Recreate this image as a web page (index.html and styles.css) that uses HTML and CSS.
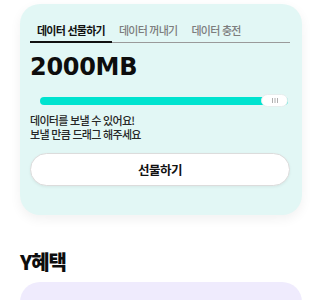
FILE: index.html
```html
<!DOCTYPE html>
<html lang="ko">
<head>
<meta charset="utf-8">
<link rel="stylesheet" href="styles.css">
</head>
<body>
<div class="page">
  <section class="gift-card">
    <nav class="tabs">
      <span class="tab active">데이터 선물하기</span>
      <span class="tab">데이터 꺼내기</span>
      <span class="tab">데이터 충전</span>
    </nav>
    <div class="amount">2000MB</div>
    <div class="slider">
      <div class="fill" style="width: 100%"></div>
      <div class="thumb">
        <svg width="6" height="5" viewBox="0 0 6 5"><path d="M0.5 0v5M3 0v5M5.5 0v5" stroke="#9a9a9a" stroke-width="0.8"/></svg>
      </div>
    </div>
    <p class="desc"><span class="line">데이터를 보낼 수 있어요!</span><span class="line">보낼 만큼 드래그 해주세요</span></p>
    <button class="gift-btn">선물하기</button>
  </section>
  <h2 class="section-title">Y혜택</h2>
  <section class="benefit-card"></section>
</div>
</body>
</html>
```
FILE: styles.css
```css
* { box-sizing: border-box; }
html, body { margin: 0; padding: 0; background: #fff; }
body { font-family: "Noto Sans CJK KR", "Noto Sans", sans-serif; color: #111; }
.page { padding: 4px 18px 0 20px; display: flex; flex-direction: column; }
.gift-card {
  background: #e2f7f5;
  border-radius: 20px;
  padding: 19px 12px 27px 10px;
  height: 211px;
  box-shadow: 0 4px 12px rgba(0,0,0,0.06);
  display: flex;
  flex-direction: column;
}
.tabs {
  display: flex;
  border-bottom: 1px solid #9a9a9a;
}
.tab {
  font-size: 11px;
  line-height: 14px;
  letter-spacing: -0.75px;
  padding: 0 7px 4px 7px;
  color: #7d7d7d;
  font-weight: 500;
  border-bottom: 2px solid transparent;
  margin-bottom: -1px;
}
.tab.active { color: #111; font-weight: 700; border-bottom-color: #111; }
.amount {
  margin-top: 10px;
  font-family: "DejaVu Sans", sans-serif;
  font-weight: 700;
  font-size: 24px;
  line-height: 28px;
  letter-spacing: -0.3px;
  color: #0d0d0d;
}
.slider {
  position: relative;
  margin: 13px 2px 0 10px;
  height: 13px;
  display: flex;
  align-items: center;
}
.fill {
  height: 8px;
  background: #00e3cf;
  border-radius: 4px;
}
.thumb {
  position: absolute;
  right: 0;
  top: 0;
  width: 27px;
  height: 13px;
  border-radius: 7px;
  background: #fff;
  border: 1px solid #e6eeee;
  display: flex;
  align-items: center;
  justify-content: center;
}
.thumb svg { display: block; }
.desc {
  margin: 7px 0 0 0;
  display: flex;
  flex-direction: column;
  font-size: 11px;
  line-height: 13.5px;
  letter-spacing: -0.7px;
  font-weight: 500;
  color: #262626;
}
.line { display: block; }
.gift-btn {
  margin-top: 12px;
  height: 33px;
  width: 100%;
  border: 1px solid #dcdcdc;
  border-radius: 17px;
  background: #fff;
  font-family: "Noto Sans CJK KR", sans-serif;
  font-size: 12.5px;
  font-weight: 700;
  letter-spacing: -0.5px;
  color: #111;
  box-shadow: 0 1px 3px rgba(0,0,0,0.06);
}
.section-title {
  margin: 35px 0 0 0;
  font-size: 20px;
  line-height: 24px;
  font-weight: 900;
  letter-spacing: -1px;
  color: #0d0d0d;
}
.benefit-card {
  margin-top: 8px;
  height: 60px;
  background: #efebfd;
  border-radius: 20px;
}
```
